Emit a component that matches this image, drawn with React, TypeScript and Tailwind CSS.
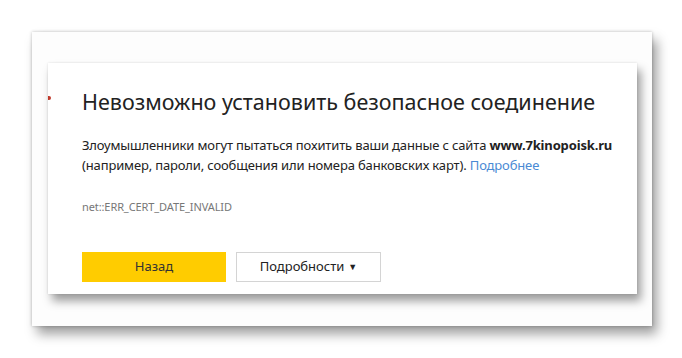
export default function App() {
  return (
    <div className="w-[682px] h-[358px] bg-white pt-[32px] pl-[32px] overflow-hidden" style={{ fontFamily: '"Noto Sans", "Open Sans", sans-serif' }}>
      {/* outer window */}
      <div className="w-[620px] h-[294px] bg-[#fdfdfd] pt-[31px] pl-[16px] shadow-[0_0_3px_rgba(0,0,0,0.25),5px_8px_11px_rgba(0,0,0,0.38)]">
        {/* error card */}
        <div className="relative w-[589px] h-[231px] bg-white pl-[34px] pt-[24px] shadow-[0_0_2px_rgba(0,0,0,0.12),4px_7px_9px_rgba(0,0,0,0.38)]">
          <div className="absolute left-0 top-[33px] w-[3px] h-[4px] bg-[#c0392b] rounded-r-full" />
          <h1 className="text-[21.5px] leading-[29px] text-[#222]">
            Невозможно установить безопасное соединение
          </h1>
          <p className="mt-[19px] text-[13px] leading-[20px] text-[#222] tracking-[-0.15px]">
            Злоумышленники могут пытаться похитить ваши данные с сайта <b className="font-bold">www.7kinopoisk.ru</b>
            <br />
            (например, пароли, сообщения или номера банковских карт). <span className="text-[#4a8ad4]">Подробнее</span>
          </p>
          <div className="mt-[24px] text-[11px] leading-[16px] text-[#777] tracking-[-0.1px]">net::ERR_CERT_DATE_INVALID</div>
          <div className="mt-[37px] flex gap-[10px]">
            <button className="w-[144px] h-[30px] bg-[#ffcc00] text-[13px] text-[#333]">Назад</button>
            <button className="w-[145px] h-[30px] bg-white border border-[#d4d4d4] text-[13px] text-[#222] flex items-center justify-center gap-[4px]">
              Подробности <span className="text-[9px]">▼</span>
            </button>
          </div>
        </div>
      </div>
    </div>
  )
}
